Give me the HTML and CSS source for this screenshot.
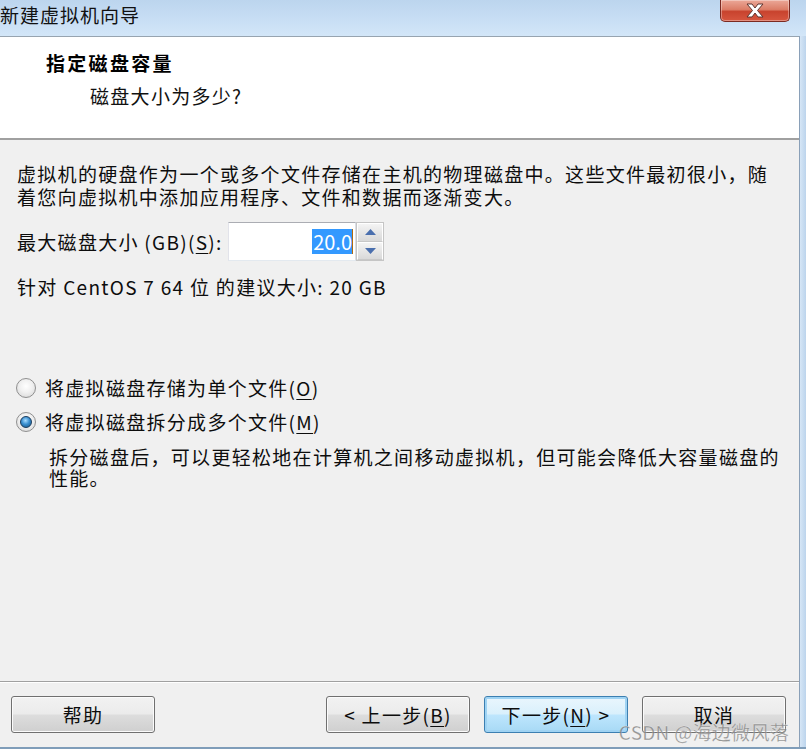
FILE: index.html
```html
<!DOCTYPE html>
<html lang="zh-CN">
<head>
<meta charset="utf-8">
<title>新建虚拟机向导</title>
<link rel="stylesheet" href="styles.css">
</head>
<body>
<div class="window">
  <div class="titlebar">
    <span class="title">新建虚拟机向导</span>
    <div class="close">
      <svg width="20" height="15" viewBox="0 0 20 15">
        <path d="M2 1 L7 1 L10 5 L13 1 L18 1 L12.5 7.5 L18 14 L13 14 L10 10 L7 14 L2 14 L7.5 7.5 Z" fill="#ffffff" stroke="#5e3530" stroke-width="1" stroke-linejoin="round"/>
      </svg>
    </div>
  </div>
  <div class="frame">
    <div class="dialog">
      <div class="header">
        <div class="h-title">指定磁盘容量</div>
        <div class="h-sub">磁盘大小为多少?</div>
      </div>
      <div class="content">
        <p class="para">虚拟机的硬盘作为一个或多个文件存储在主机的物理磁盘中。这些文件最初很小，随<br>着您向虚拟机中添加应用程序、文件和数据而逐渐变大。</p>
        <div class="size-row">
          <span class="label">最大磁盘大小 (GB)(<u>S</u>):</span>
          <div class="spin">
            <div class="spin-input"><span class="sel">20.0</span><span class="caret"></span></div>
            <div class="spin-btns">
              <div class="spin-btn"><svg width="11" height="6" viewBox="0 0 11 6"><path d="M0 6 L5.5 0 L11 6 Z" fill="#4a6fae"/></svg></div>
              <div class="spin-btn"><svg width="11" height="6" viewBox="0 0 11 6"><path d="M0 0 L5.5 6 L11 0 Z" fill="#4a6fae"/></svg></div>
            </div>
          </div>
        </div>
        <p class="rec">针对 CentOS 7 64 位 的建议大小: 20 GB</p>
        <div class="options">
          <div class="radio-row"><span class="radio"></span><span>将虚拟磁盘存储为单个文件(<u>O</u>)</span></div>
          <div class="radio-row"><span class="radio checked"></span><span>将虚拟磁盘拆分成多个文件(<u>M</u>)</span></div>
          <p class="desc">拆分磁盘后，可以更轻松地在计算机之间移动虚拟机，但可能会降低大容量磁盘的<br>性能。</p>
        </div>
      </div>
      <div class="footer">
        <button class="btn">帮助</button>
        <div class="spacer"></div>
        <button class="btn">&lt; 上一步(<u>B</u>)</button>
        <button class="btn focus">下一步(<u>N</u>) &gt;</button>
        <button class="btn">取消</button>
        <span class="watermark">CSDN @海边微风落</span>
      </div>
    </div>
    <div class="rframe"></div>
  </div>
</div>
</body>
</html>
```
FILE: styles.css
```css
* { box-sizing: border-box; }
html, body { margin: 0; padding: 0; }
body {
  width: 806px;
  height: 749px;
  overflow: hidden;
  font-family: "Noto Sans CJK SC", "Noto Sans", sans-serif;
  font-size: 19px;
  letter-spacing: 1.3px;
  color: #0d0d0d;
  background: #c4dbf1;
}
.window {
  display: flex;
  flex-direction: column;
  height: 749px;
}
.titlebar {
  height: 36px;
  flex: none;
  display: flex;
  align-items: flex-start;
  background: linear-gradient(180deg, #bcd5ee 0%, #c9dff5 60%, #d3e6f8 100%);
}
.title {
  line-height: 30px;
  font-size: 19px;
  letter-spacing: 1px;
  color: #111;
}
.close {
  margin-left: auto;
  margin-right: 16px;
  width: 70px;
  height: 22px;
  border: 1px solid #7b2a22;
  border-top: none;
  border-radius: 0 0 5px 5px;
  background: linear-gradient(180deg, #eba898 0%, #dc7d67 45%, #c8432e 55%, #d6563f 100%);
  display: flex;
  align-items: center;
  justify-content: center;
  box-shadow: inset 0 0 0 1px rgba(255,255,255,0.35);
}
.frame {
  flex: 1;
  display: flex;
  min-height: 0;
  border-bottom: 2px solid #7f9db9;
}
.dialog {
  flex: 1;
  display: flex;
  flex-direction: column;
  background: #f0f0f0;
  border-right: 1px solid #8aa0b8;
  position: relative;
}
.rframe {
  width: 6px;
  flex: none;
  background: linear-gradient(90deg, #d6e6f6, #bcd4ec);
}
.header {
  height: 104px;
  flex: none;
  background: #fff;
  border-top: 1px solid #97a4b0;
  border-bottom: 2px solid #a0a0a0;
  padding-top: 13px;
}
.h-title {
  padding-left: 46px;
  font-weight: bold;
  letter-spacing: 2.3px;
  line-height: 26px;
  color: #000;
}
.h-sub {
  padding-left: 90px;
  margin-top: 7px;
  line-height: 26px;
  color: #111;
}
.content {
  flex: 1;
  padding: 22px 0 0 17px;
}
.para {
  margin: 0;
  line-height: 23px;
}
.size-row {
  display: flex;
  align-items: center;
  margin-top: 14px;
}
.label {
  width: 211px;
}
.spin {
  display: flex;
  height: 39px;
}
.spin-input {
  width: 128px;
  background: #fff;
  border: 1px solid #abadb3;
  border-color: #abadb3 #dbdfe6 #e3e9ef #e2e3ea;
  display: flex;
  align-items: center;
  justify-content: flex-end;
  padding-right: 2px;
}
.sel {
  background: #3399ff;
  color: #fff;
  line-height: 25px;
  padding: 0 0 0 1px;
  letter-spacing: 0;
  font-size: 20px;
}
.caret {
  width: 1px;
  height: 25px;
  background: #b06a10;
}
.spin-btns {
  width: 28px;
  display: flex;
  flex-direction: column;
  border: 1px solid #c5c5c5;
  background: #ececec;
}
.spin-btn {
  flex: 1;
  display: flex;
  align-items: center;
  justify-content: center;
  border: 1px solid #fff;
  background: linear-gradient(180deg, #f4f4f4 0%, #e6e6e6 50%, #d9d9d9 100%);
  border-bottom-color: #c8c8c8;
}
.rec {
  margin: 14px 0 0 0;
  line-height: 23px;
}
.options {
  margin-top: 78px;
}
.radio-row {
  display: flex;
  align-items: center;
  line-height: 24px;
  margin-left: -1px;
}
.radio-row + .radio-row {
  margin-top: 10px;
}
.radio {
  width: 20px;
  height: 20px;
  border-radius: 50%;
  border: 1px solid #8f8f8f;
  background: radial-gradient(circle at 50% 40%, #ffffff 0%, #f0f0f0 45%, #d3d3d3 100%);
  margin-right: 9px;
  flex: none;
  display: flex;
  align-items: center;
  justify-content: center;
}
.radio.checked::after {
  content: "";
  width: 10px;
  height: 10px;
  border-radius: 50%;
  border: 1px solid #1a3b5c;
  background: radial-gradient(circle at 45% 35%, #a8dcff 0%, #3a8fd0 45%, #14507f 100%);
}
.desc {
  margin: 12px 0 0 32px;
  line-height: 21px;
}
.footer {
  height: 66px;
  flex: none;
  border-top: 1px solid #a0a0a0;
  box-shadow: inset 0 1px 0 #ffffff;
  display: flex;
  align-items: flex-start;
  padding: 14px 13px 0 11px;
  gap: 14px;
  position: relative;
}
.spacer { flex: 1; }
.btn {
  width: 144px;
  height: 37px;
  font-family: inherit;
  font-size: 19px;
  letter-spacing: 1.3px;
  color: #0d0d0d;
  border: 1px solid #707070;
  border-radius: 3px;
  background: linear-gradient(180deg, #f2f2f2 0%, #ebebeb 49%, #dddddd 51%, #cfcfcf 100%);
  box-shadow: inset 0 0 0 1px #fbfbfb;
  padding: 0;
  line-height: 1;
}
.btn.focus {
  border-color: #3c7fb1;
  box-shadow: inset 0 0 0 2px #9fd3f3;
  background: linear-gradient(180deg, #eaf6fd 0%, #d9f0fc 49%, #bee6fd 51%, #a7d9f5 100%);
}
.btn u, .label u, .radio-row u { text-decoration-thickness: 1px; text-underline-offset: 3px; }
.watermark {
  position: absolute;
  right: 10px;
  top: 36px;
  font-size: 19px;
  letter-spacing: 0.3px;
  color: rgba(120,120,120,0.75);
  -webkit-text-stroke: 0.3px rgba(255,255,255,0.6);
  white-space: nowrap;
}
```
